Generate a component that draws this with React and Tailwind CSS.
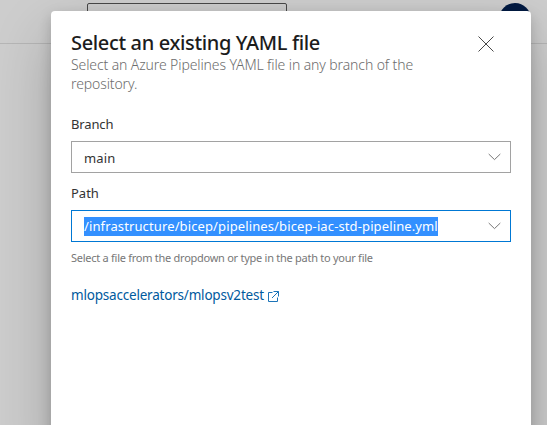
import React from "react";

function Chevron() {
  return (
    <svg className="mr-[9px] h-[8px] w-[13px] shrink-0" viewBox="0 0 13 8" fill="none" stroke="#777" strokeWidth="1">
      <path d="M0.7 1 6.5 6.6 12.3 1" />
    </svg>
  );
}

export default function App() {
  return (
    <div className="relative h-[425px] w-[547px] overflow-hidden bg-[#cdcdcd] font-['Noto_Sans','Open_Sans',sans-serif] text-[#333]">
      <header className="relative h-[44px] border-b border-[#b6b6b6] bg-[#cdcdcd]">
        <div className="absolute left-[87px] top-[3px] h-[32px] w-[200px] rounded-[2px] border border-[#484848]" />
        <div className="absolute left-[499px] top-[3px] h-[32px] w-[32px] rounded-full bg-[#001a43]" />
      </header>

      <section className="absolute left-[51px] top-[11px] h-[440px] w-[480px] rounded-[4px] bg-white px-[20px] shadow-[0_25px_58px_rgba(0,0,0,0.22),0_5px_14px_rgba(0,0,0,0.18)]">
        <div className="flex h-[81px] justify-between pt-[19px]">
          <div className="whitespace-nowrap">
            <h1 className="h-[25px] text-[20px] font-medium leading-[25px] tracking-[-0.35px] text-[#1c1c1c]">Select an existing YAML file</h1>
            <p className="text-[14px] font-light leading-[19px] tracking-[-0.11px] text-[#6c6c6c]">
              Select an Azure Pipelines YAML file in any branch of the
              <br />
              repository.
            </p>
          </div>
          <svg className="mr-[17px] mt-[6px] h-[16px] w-[16px] shrink-0" viewBox="0 0 16 16" fill="none" stroke="#333" strokeWidth="0.9">
            <path d="M0.5 0.5 15.5 15.5M15.5 0.5 0.5 15.5" />
          </svg>
        </div>

        <label className="mt-[22px] block h-[27px] text-[13px] leading-[20px] tracking-[-0.15px]">Branch</label>
        <div className="flex h-[32px] items-center justify-between border border-[#a2a2a2] pl-[12px]">
          <span className="pt-[1px] text-[13px] leading-[20px] tracking-[0.15px]">main</span>
          <Chevron />
        </div>

        <label className="mt-[10px] block h-[27px] text-[13px] leading-[20px]">Path</label>
        <div className="flex h-[32px] items-center justify-between border border-[#0078d4] pl-[12px]">
          <span className="mt-[1px] block h-[19px] whitespace-nowrap bg-[#3390ff] text-[13px] leading-[19px] tracking-[0.12px] text-white">/infrastructure/bicep/pipelines/bicep-iac-std-pipeline.yml</span>
          <Chevron />
        </div>

        <p className="mt-[8px] h-[16px] whitespace-nowrap text-[11px] leading-[16px] tracking-[-0.265px] text-[#777]">
          <span>Select a file from the dropdown or type in the path to your file</span>
        </p>

        <a className="mt-[19px] flex h-[20px] items-center text-[13.5px] leading-[20px] tracking-[-0.2px] text-[#005a9e]">
          <span>mlopsaccelerators/mlopsv2test</span>
          <svg className="ml-[4px] mt-[3px] h-[11px] w-[11px]" viewBox="0 0 11 11" fill="none" stroke="#1c74b8" strokeWidth="1">
            <path d="M4.5 1.5H0.5v9h9V6.5M5.5 0.5h5v5M10.5 0.5 4 7" />
          </svg>
        </a>
      </section>
    </div>
  );
}
